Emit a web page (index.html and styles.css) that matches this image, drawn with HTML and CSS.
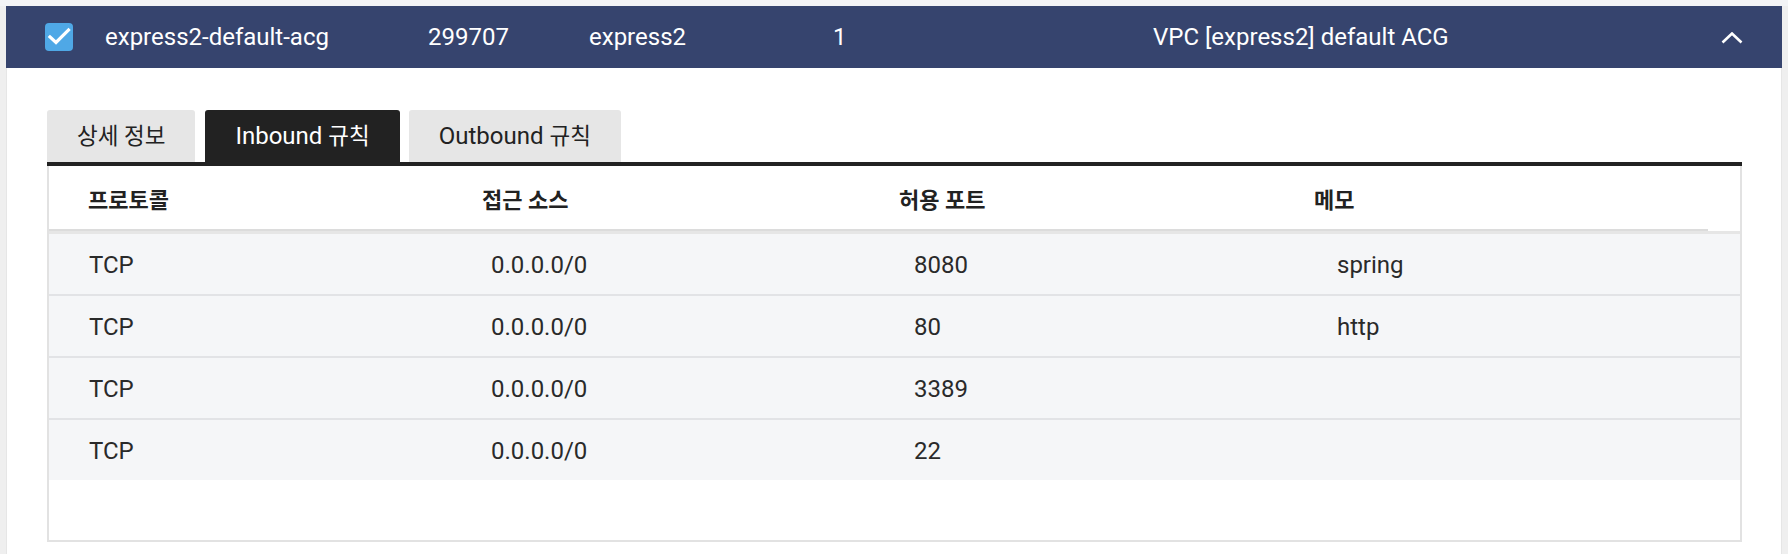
FILE: index.html
```html
<!DOCTYPE html>
<html lang="ko">
<head>
<meta charset="utf-8">
<title>ACG</title>
<link rel="stylesheet" href="styles.css">
</head>
<body>
<div class="panel">
  <div class="bar">
    <span class="cb">
      <svg width="28" height="28" viewBox="0 0 28 28"><rect width="28" height="28" rx="4" fill="#4fa8e6"/><polyline points="5,14 11,19.5 23.5,7" fill="none" stroke="#fff" stroke-width="3.2" stroke-linecap="square"/></svg>
    </span>
    <span class="c">express2-default-acg</span>
    <span class="c">299707</span>
    <span class="c">express2</span>
    <span class="c">1</span>
    <span class="c">VPC [express2] default ACG</span>
    <svg class="chev" width="22" height="12" viewBox="0 0 22 12"><polyline points="1.5,10.5 11,1.5 20.5,10.5" fill="none" stroke="#fff" stroke-width="2.6"/></svg>
  </div>
  <div class="content">
    <div class="tabs">
      <div class="tab"><span class="ko">상세 정보</span></div>
      <div class="tab active">Inbound <span class="ko">규칙</span></div>
      <div class="tab">Outbound <span class="ko">규칙</span></div>
    </div>
    <div class="table">
      <div class="thead">
        <div class="th-row">
          <div class="th">프로토콜</div>
          <div class="th">접근 소스</div>
          <div class="th">허용 포트</div>
          <div class="th">메모</div>
        </div>
      </div>
      <div class="tbody">
        <div class="tr"><div class="td">TCP</div><div class="td">0.0.0.0/0</div><div class="td">8080</div><div class="td">spring</div></div>
        <div class="tr"><div class="td">TCP</div><div class="td">0.0.0.0/0</div><div class="td">80</div><div class="td">http</div></div>
        <div class="tr"><div class="td">TCP</div><div class="td">0.0.0.0/0</div><div class="td">3389</div><div class="td"></div></div>
        <div class="tr"><div class="td">TCP</div><div class="td">0.0.0.0/0</div><div class="td">22</div><div class="td"></div></div>
      </div>
    </div>
  </div>
</div>
</body>
</html>
```

FILE: styles.css
```css
html, body {
  margin: 0;
  padding: 0;
}
body {
  background: #efefef;
  font-family: Roboto, "Noto Sans CJK KR", sans-serif;
  color: #222;
  height: 554px;
  overflow: hidden;
  border-top: 6px solid #f3f4f6;
  box-sizing: border-box;
}
.panel {
  margin: 0 6px;
  background: #fff;
  border-left: 1px solid #e6e6e6;
  border-right: 1px solid #e6e6e6;
  height: 548px;
  box-sizing: border-box;
}
.bar {
  height: 62px;
  background: #36446e;
  color: #fff;
  font-size: 24px;
  display: grid;
  grid-template-columns: 60px 323px 161px 244px 320px 1fr auto;
  align-items: center;
  padding: 0 39px 0 39px;
  margin: 0 -1px;
}
.cb {
  display: flex;
  width: 28px;
  height: 28px;
}
.cb svg { display: block; }
.c {
  white-space: nowrap;
  line-height: 28px;
}
.chev {
  display: block;
  margin-top: 1px;
}
.content {
  padding: 42px 39px 0 40px;
}
.tabs {
  display: flex;
  gap: 10px;
  border-bottom: 4px solid #222;
}
.tab {
  height: 52px;
  line-height: 52px;
  padding: 0 30px;
  background: #e6e6e6;
  color: #222;
  font-size: 24px;
  border-radius: 3px 3px 0 0;
}
.tab .ko {
  font-size: 22.5px;
}
.tab:nth-child(3) { margin-left: -1px; }
.tab.active {
  background: #222;
  color: #fff;
}
.table {
  border: 2px solid #e2e2e2;
  border-top: none;
  height: 376px;
  box-sizing: border-box;
}
.thead {
  border-bottom: 3px solid #e6e6e6;
}
.th-row {
  display: grid;
  grid-template-columns: 394px 417px 415px 1fr;
  margin-right: 32px;
  height: 63px;
  align-items: center;
  border-bottom: 2px solid #dcdcdc;
}
.th {
  padding-left: 39px;
  font-size: 22px;
  font-weight: 700;
  color: #222;
}
.tbody {
  background: #fff;
}
.tr {
  display: grid;
  grid-template-columns: 402px 423px 423px 1fr;
  height: 60px;
  align-items: center;
  background: #f5f6f8;
  border-bottom: 2px solid #e2e3e6;
}
.tr:last-child {
  border-bottom: none;
}
.td {
  padding-left: 40px;
  font-size: 24px;
  color: #2a2a2a;
  padding-top: 2px;
}
```
